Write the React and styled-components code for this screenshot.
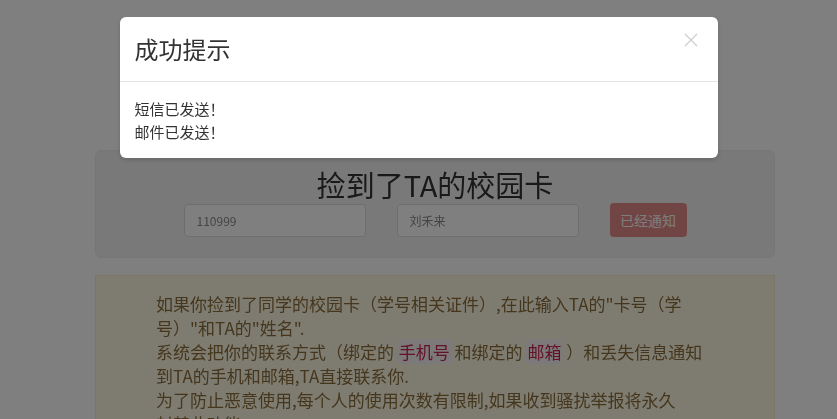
import React from "react";
import styled, { createGlobalStyle } from "styled-components";

const GlobalStyle = createGlobalStyle`
    html, body {
        margin: 0;
        padding: 0;
        background: #fff;
        font-family: "Noto Sans CJK SC", "Liberation Sans", sans-serif;
    }
`;

const App = () => {
    return (
        <>
            <GlobalStyle />
            <Page>
                <FoundCard>
                    <CardTitle>捡到了TA的校园卡</CardTitle>
                    <CardForm>
                        <CardInput defaultValue="110999" />
                        <CardInput defaultValue="刘禾来" />
                        <NotifyButton disabled>已经通知</NotifyButton>
                    </CardForm>
                </FoundCard>

                {/* lines broken where the original page wraps */}
                <Notice>
                    如果你捡到了同学的校园卡（学号相关证件）,在此输入TA的"卡号（学
                    <br />
                    号）"和TA的"姓名".
                    <br />
                    系统会把你的联系方式（绑定的 <Code>手机号</Code> 和绑定的 <Code>邮箱</Code> ）和丢失信息通知
                    <br />
                    到TA的手机和邮箱,TA直接联系你.
                    <br />
                    为了防止恶意使用,每个人的使用次数有限制,如果收到骚扰举报将永久
                    <br />
                    封禁此功能.
                </Notice>
            </Page>

            {/* modal sits over the page */}
            <Backdrop />
            <ModalLayer>
                <Dialog>
                    <DialogHeader>
                        <DialogTitle>成功提示</DialogTitle>
                        <CloseButton aria-label="close">
                            <svg width="14" height="14" viewBox="0 0 14 14">
                                <path d="M1 1 L13 13 M13 1 L1 13" stroke="#cfcfcf" strokeWidth="1.4" />
                            </svg>
                        </CloseButton>
                    </DialogHeader>
                    <DialogBody>
                        短信已发送！
                        <br />
                        邮件已发送！
                    </DialogBody>
                </Dialog>
            </ModalLayer>
        </>
    );
};

export default App;

const Page = styled.div`
    padding: 150px 0 40px 95px;
    filter: blur(0.6px);
`;

const FoundCard = styled.div`
    width: 680px;
    height: 108px;
    box-sizing: border-box;
    background: #f3f3f3;
    border: 1px solid #ececec;
    border-radius: 6px;
    display: flex;
    flex-direction: column;
    align-items: center;
    padding-top: 14px;
`;

const CardTitle = styled.h2`
    margin: 0;
    font-size: 29px;
    line-height: 38px;
    font-weight: 400;
    color: #333;
`;

const CardForm = styled.div`
    display: flex;
    align-items: center;
    gap: 31px;
`;

const CardInput = styled.input`
    width: 182px;
    height: 33px;
    box-sizing: border-box;
    border: 1px solid #ddd;
    border-radius: 4px;
    background: #fff;
    padding: 0 12px;
    font-size: 12px;
    color: #888;
    font-family: inherit;
`;

const NotifyButton = styled.button`
    width: 77px;
    height: 34px;
    border: none;
    border-radius: 4px;
    background: #d9534f;
    opacity: 0.65;
    color: #fff;
    font-size: 14px;
    font-family: inherit;
`;

const Notice = styled.div`
    width: 680px;
    box-sizing: border-box;
    margin-top: 17px;
    padding: 16px 40px 16px 60px;
    background: #fcf8e3;
    border: 1px solid #faebcc;
    color: #8a6d3b;
    font-size: 17px;
    line-height: 24px;
    white-space: nowrap;
`;

const Code = styled.code`
    font-family: inherit;
    color: #c7254e;
    background: #f9f2f4;
    padding: 0 1px;
    border-radius: 3px;
`;

const Backdrop = styled.div`
    position: fixed;
    inset: 0;
    background: rgba(0, 0, 0, 0.5);
`;

const ModalLayer = styled.div`
    position: fixed;
    inset: 0;
    display: flex;
    justify-content: center;
    align-items: flex-start;
    padding-top: 17px;
`;

const Dialog = styled.div`
    width: 598px;
    background: #fff;
    border-radius: 6px;
    box-shadow: 0 2px 4px rgba(0, 0, 0, 0.15);
`;

const DialogHeader = styled.div`
    display: flex;
    justify-content: space-between;
    align-items: flex-start;
    padding: 15px 20px 15px 15px;
    border-bottom: 1px solid #e5e5e5;
`;

const DialogTitle = styled.h4`
    margin: 0;
    font-size: 24px;
    line-height: 34px;
    font-weight: 400;
    color: #333;
`;

const CloseButton = styled.button`
    border: none;
    background: none;
    padding: 0;
    margin-top: 1px;
    display: flex;
    cursor: pointer;
`;

const DialogBody = styled.div`
    padding: 15px;
    font-size: 15px;
    line-height: 23px;
    color: #333;
`;
